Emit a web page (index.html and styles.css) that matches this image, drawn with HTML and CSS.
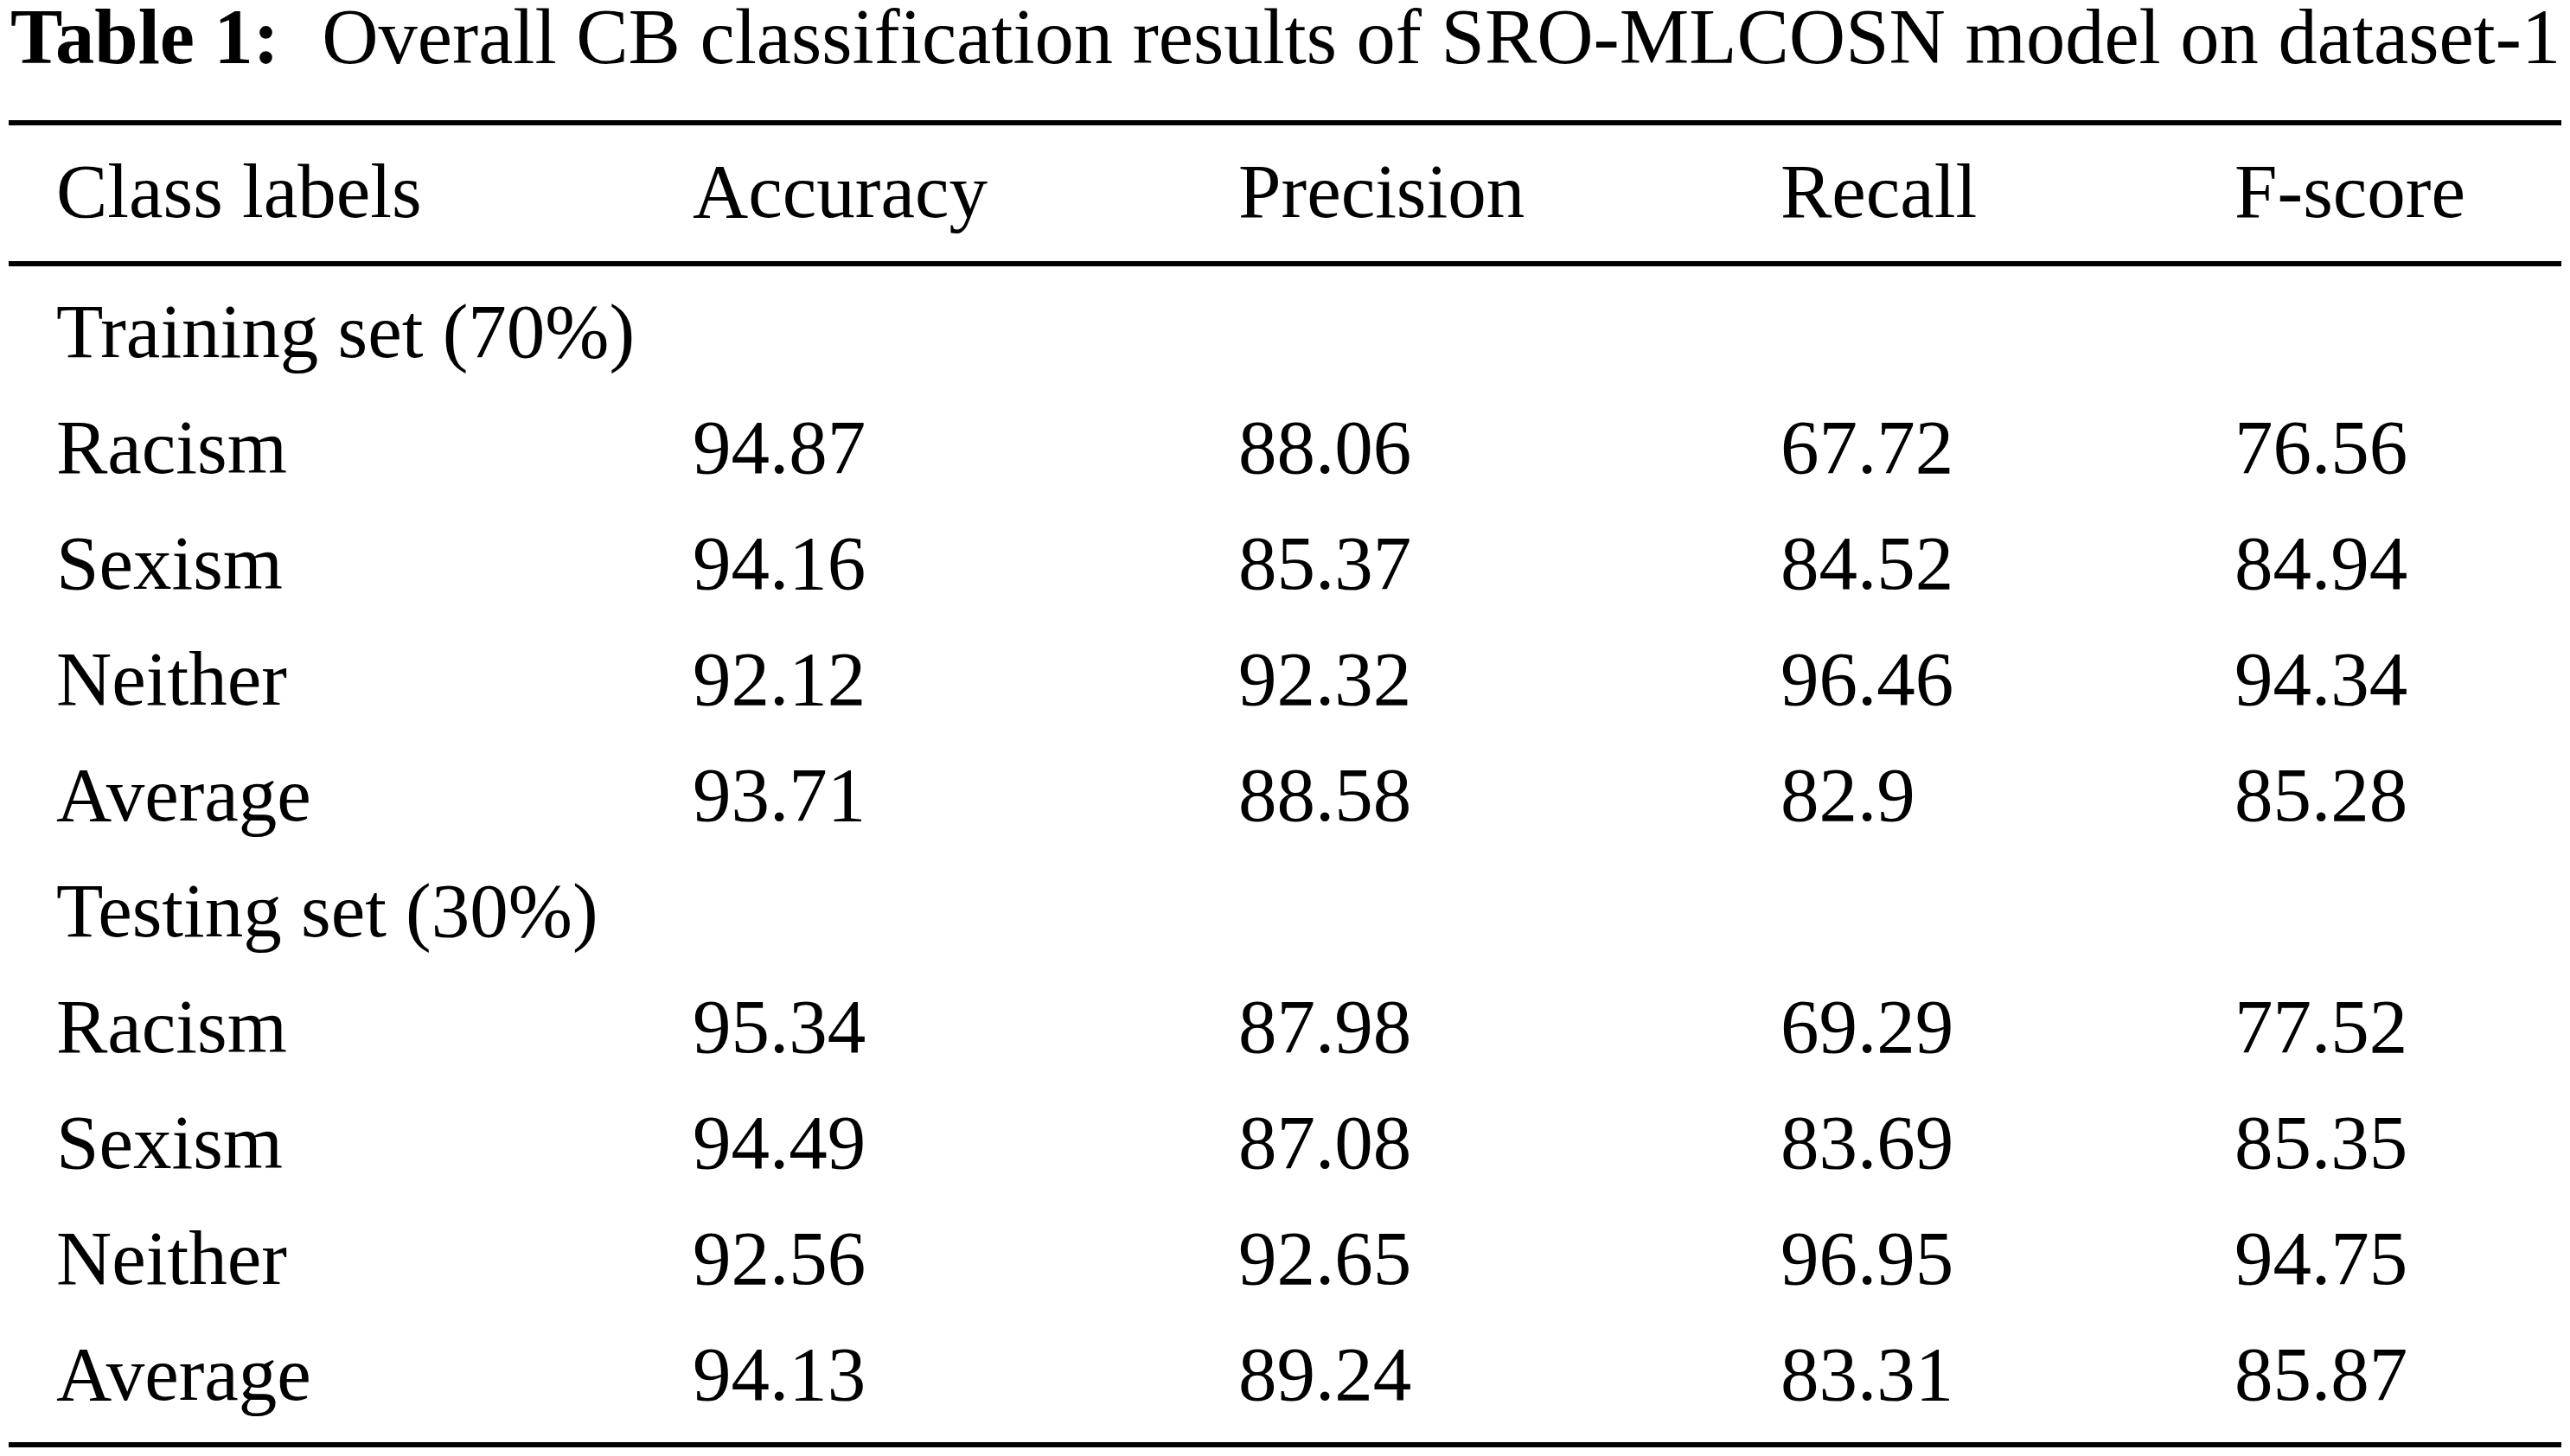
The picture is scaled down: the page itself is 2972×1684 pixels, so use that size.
FILE: index.html
```html
<!DOCTYPE html>
<html lang="en">
<head>
<meta charset="utf-8">
<title>Table 1</title>
<link rel="stylesheet" href="styles.css">
</head>
<body>
<div class="page">
  <div class="caption"><span class="label">Table 1:</span>&nbsp; Overall CB classification results of SRO-MLCOSN model on dataset-1</div>
  <table class="results">
    <colgroup>
      <col class="c1"><col class="c2"><col class="c3"><col class="c4"><col class="c5">
    </colgroup>
    <thead>
      <tr><th>Class labels</th><th>Accuracy</th><th>Precision</th><th>Recall</th><th>F-score</th></tr>
    </thead>
    <tbody>
      <tr class="first"><td colspan="5">Training set (70%)</td></tr>
      <tr><td>Racism</td><td>94.87</td><td>88.06</td><td>67.72</td><td>76.56</td></tr>
      <tr><td>Sexism</td><td>94.16</td><td>85.37</td><td>84.52</td><td>84.94</td></tr>
      <tr><td>Neither</td><td>92.12</td><td>92.32</td><td>96.46</td><td>94.34</td></tr>
      <tr><td>Average</td><td>93.71</td><td>88.58</td><td>82.9</td><td>85.28</td></tr>
      <tr><td colspan="5">Testing set (30%)</td></tr>
      <tr><td>Racism</td><td>95.34</td><td>87.98</td><td>69.29</td><td>77.52</td></tr>
      <tr><td>Sexism</td><td>94.49</td><td>87.08</td><td>83.69</td><td>85.35</td></tr>
      <tr><td>Neither</td><td>92.56</td><td>92.65</td><td>96.95</td><td>94.75</td></tr>
      <tr class="last"><td>Average</td><td>94.13</td><td>89.24</td><td>83.31</td><td>85.87</td></tr>
    </tbody>
  </table>
</div>
</body>
</html>
```
FILE: styles.css
```css
html, body {
  margin: 0;
  padding: 0;
  background: #ffffff;
}

body {
  font-family: "Liberation Serif", "Times New Roman", serif;
  font-size: 89px;
  color: #000000;
}

.page {
  padding-left: 10px;
  width: 2952px;
}

.caption {
  font-size: 90.5px;
  line-height: 85px;
  padding-left: 2px;
  white-space: nowrap;
}

.label {
  font-weight: bold;
  margin-right: 4px;
}

.results {
  margin-top: 54px;
  width: 2952px;
  border-collapse: separate;
  border-spacing: 0;
  table-layout: fixed;
}

.c1 { width: 791px; }
.c2 { width: 631px; }
.c3 { width: 627px; }
.c4 { width: 525px; }
.c5 { width: 378px; }

.results th,
.results td {
  font-weight: normal;
  text-align: left;
  line-height: 134px;
  padding: 0;
  white-space: nowrap;
  vertical-align: baseline;
}

.results th:first-child,
.results td:first-child {
  padding-left: 55px;
}

.results th {
  border-top: 6px solid #000;
  border-bottom: 6px solid #000;
  padding-top: 9px;
  padding-bottom: 14px;
}

.results tr.first td {
  padding-top: 8px;
}

.results tr.last td {
  padding-bottom: 12px;
  border-bottom: 6px solid #000;
}
```
